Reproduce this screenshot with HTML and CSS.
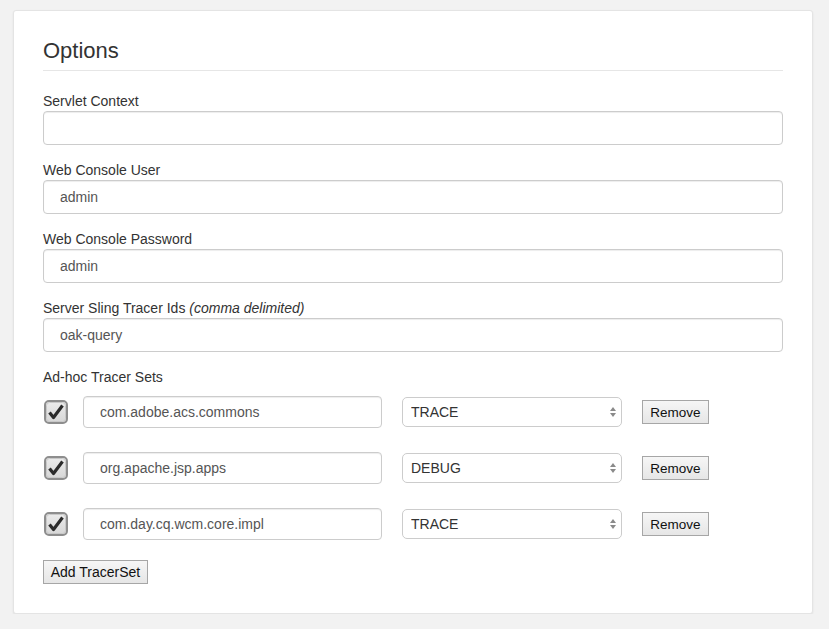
FILE: index.html
```html
<!DOCTYPE html>
<html>
<head>
<meta charset="utf-8">
<link rel="stylesheet" href="styles.css">
</head>
<body>
<div class="card">
  <h2 class="title">Options</h2>
  <div class="field">
    <label class="label">Servlet Context</label>
    <input class="text" type="text" value="">
  </div>
  <div class="field">
    <label class="label">Web Console User</label>
    <input class="text" type="text" value="admin">
  </div>
  <div class="field">
    <label class="label">Web Console Password</label>
    <input class="text" type="text" value="admin">
  </div>
  <div class="field">
    <label class="label">Server Sling Tracer Ids <em>(comma delimited)</em></label>
    <input class="text" type="text" value="oak-query">
  </div>
  <div class="label">Ad-hoc Tracer Sets</div>
  <div class="sets">
    <div class="set">
      <svg class="check" width="24" height="24" viewBox="0 0 24 24"><defs><linearGradient id="g1" x1="0" y1="0" x2="0" y2="1"><stop offset="0" stop-color="#ececec"/><stop offset="1" stop-color="#d6d6d6"/></linearGradient></defs><rect x="1" y="1" width="22" height="22" rx="4" fill="url(#g1)" stroke="#8e8e8e" stroke-width="2"/><rect x="2.5" y="2.5" width="19" height="19" rx="3" fill="none" stroke="#c8c8c8" stroke-width="1"/><path d="M5.5 12.5 L9.5 17.5 L18.5 5.5" fill="none" stroke="#2b2b2b" stroke-width="3.2" stroke-linejoin="round"/></svg>
      <input class="logger" type="text" value="com.adobe.acs.commons">
      <div class="selwrap"><select class="level"><option>TRACE</option></select><svg class="arrows" width="8" height="12" viewBox="0 0 8 12"><path d="M1 5 L4 1 L7 5 Z M1 7 L4 11 L7 7 Z" fill="#8a8a8a"/></svg></div>
      <button class="btn">Remove</button>
    </div>
    <div class="set">
      <svg class="check" width="24" height="24" viewBox="0 0 24 24"><defs><linearGradient id="g2" x1="0" y1="0" x2="0" y2="1"><stop offset="0" stop-color="#ececec"/><stop offset="1" stop-color="#d6d6d6"/></linearGradient></defs><rect x="1" y="1" width="22" height="22" rx="4" fill="url(#g2)" stroke="#8e8e8e" stroke-width="2"/><rect x="2.5" y="2.5" width="19" height="19" rx="3" fill="none" stroke="#c8c8c8" stroke-width="1"/><path d="M5.5 12.5 L9.5 17.5 L18.5 5.5" fill="none" stroke="#2b2b2b" stroke-width="3.2" stroke-linejoin="round"/></svg>
      <input class="logger" type="text" value="org.apache.jsp.apps">
      <div class="selwrap"><select class="level"><option>DEBUG</option></select><svg class="arrows" width="8" height="12" viewBox="0 0 8 12"><path d="M1 5 L4 1 L7 5 Z M1 7 L4 11 L7 7 Z" fill="#8a8a8a"/></svg></div>
      <button class="btn">Remove</button>
    </div>
    <div class="set">
      <svg class="check" width="24" height="24" viewBox="0 0 24 24"><defs><linearGradient id="g3" x1="0" y1="0" x2="0" y2="1"><stop offset="0" stop-color="#ececec"/><stop offset="1" stop-color="#d6d6d6"/></linearGradient></defs><rect x="1" y="1" width="22" height="22" rx="4" fill="url(#g3)" stroke="#8e8e8e" stroke-width="2"/><rect x="2.5" y="2.5" width="19" height="19" rx="3" fill="none" stroke="#c8c8c8" stroke-width="1"/><path d="M5.5 12.5 L9.5 17.5 L18.5 5.5" fill="none" stroke="#2b2b2b" stroke-width="3.2" stroke-linejoin="round"/></svg>
      <input class="logger" type="text" value="com.day.cq.wcm.core.impl">
      <div class="selwrap"><select class="level"><option>TRACE</option></select><svg class="arrows" width="8" height="12" viewBox="0 0 8 12"><path d="M1 5 L4 1 L7 5 Z M1 7 L4 11 L7 7 Z" fill="#8a8a8a"/></svg></div>
      <button class="btn">Remove</button>
    </div>
  </div>
  <button class="btn add">Add TracerSet</button>
</div>
</body>
</html>
```

FILE: styles.css
```css
html, body {
  margin: 0;
  padding: 0;
  background: #f2f2f2;
  font-family: "Liberation Sans", Arial, sans-serif;
  color: #333;
}
.card {
  box-sizing: border-box;
  margin: 10px 0 0 13px;
  width: 800px;
  height: 604px;
  background: #fff;
  border: 1px solid #e4e4e4;
  border-radius: 3px;
  box-shadow: 0 1px 2px rgba(0,0,0,0.08);
  padding: 27px 29px 0 29px;
  display: flex;
  flex-direction: column;
  align-items: flex-start;
}
.title {
  align-self: stretch;
  margin: 0 0 20px 0;
  font-size: 22px;
  font-weight: 400;
  line-height: 26px;
  padding-bottom: 6px;
  border-bottom: 1px solid #e6e6e6;
  color: #333;
}
.field {
  align-self: stretch;
  display: flex;
  flex-direction: column;
  margin-bottom: 15px;
}
.label {
  font-size: 14px;
  line-height: 20px;
  height: 20px;
  color: #333;
}
.label em { font-style: italic; }
.text, .logger {
  box-sizing: border-box;
  height: 34px;
  border: 1px solid #cccccc;
  border-radius: 4px;
  box-shadow: inset 0 1px 1px rgba(0,0,0,0.075);
  padding: 0 16px;
  font-family: "Liberation Sans", Arial, sans-serif;
  font-size: 14px;
  color: #555;
  background: #fff;
  margin: 0;
  outline: none;
}
.sets {
  margin-top: 9px;
  display: flex;
  flex-direction: column;
  gap: 24px;
}
.set {
  display: flex;
  align-items: center;
  height: 32px;
}
.check {
  margin-left: 1px;
  flex: none;
}
.logger {
  height: 32px;
  width: 299px;
  margin-left: 15px;
}
.selwrap {
  position: relative;
  margin-left: 20px;
  width: 220px;
  height: 30px;
}
.level {
  box-sizing: border-box;
  -webkit-appearance: none;
  appearance: none;
  width: 220px;
  height: 30px;
  border: 1px solid #cccccc;
  border-radius: 5px;
  background: #fff;
  padding: 0 8px;
  font-family: "Liberation Sans", Arial, sans-serif;
  font-size: 14px;
  color: #333;
  margin: 0;
}
.arrows {
  position: absolute;
  right: 5px;
  top: 9px;
}
.btn {
  box-sizing: border-box;
  height: 24px;
  padding: 0 7px;
  border: 1px solid #a6a6a6;
  border-radius: 0;
  background: linear-gradient(#f6f6f6, #e6e6e6);
  font-family: "Liberation Sans", Arial, sans-serif;
  font-size: 13.5px;
  color: #111;
  margin: 0;
}
.set .btn {
  margin-left: 20px;
  width: 67px;
}
.add {
  margin-top: 20px;
  font-size: 14px;
  width: 105px;
  padding: 0;
}
```
